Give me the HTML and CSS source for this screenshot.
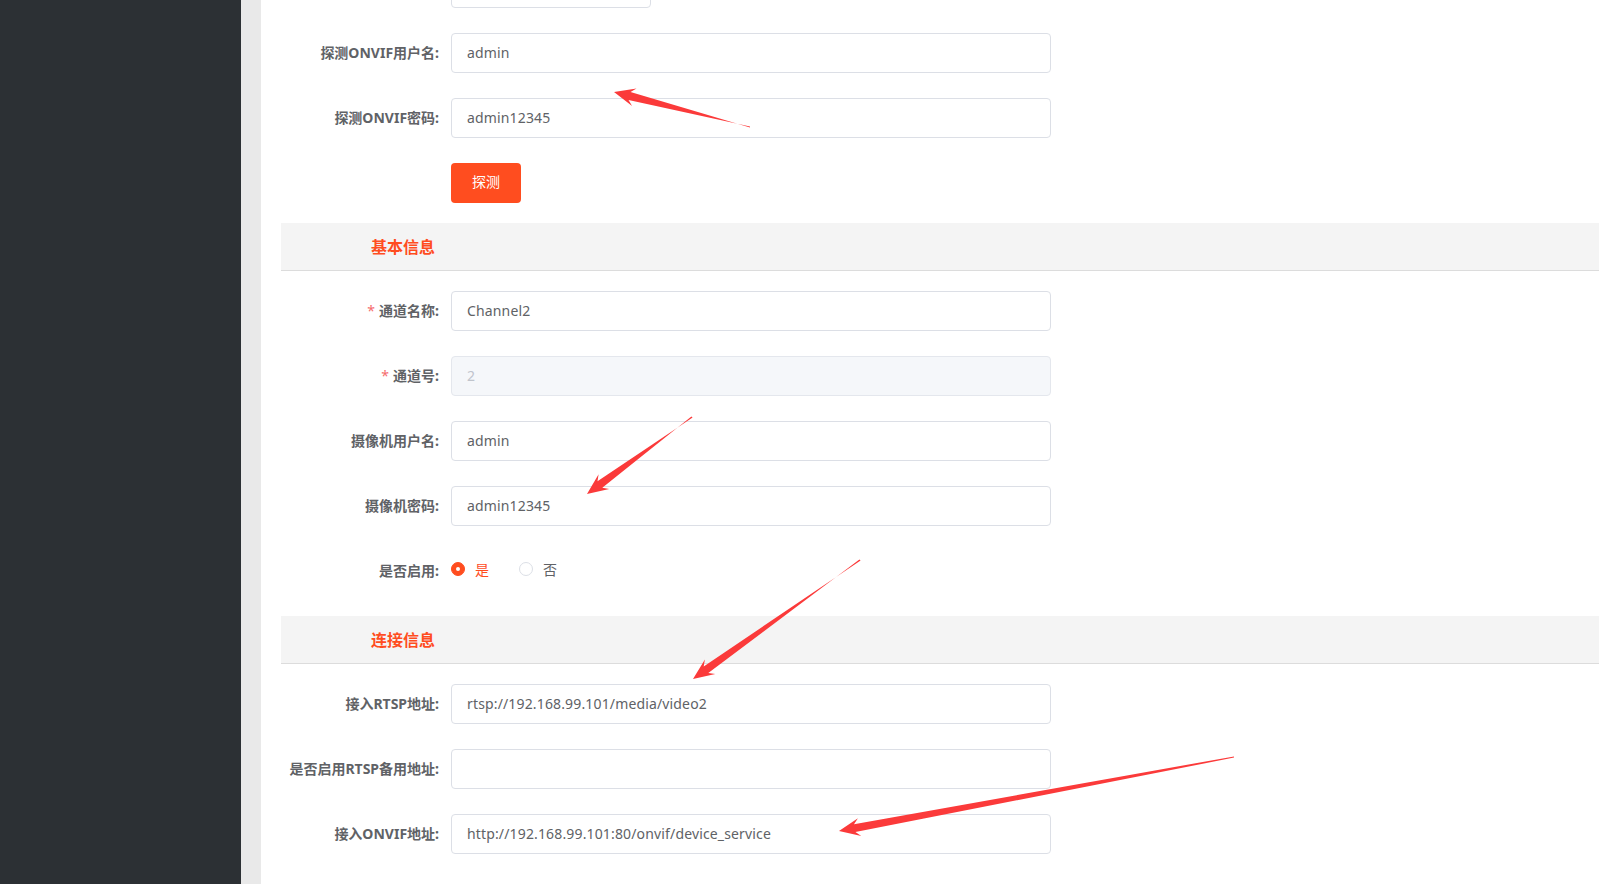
FILE: index.html
```html
<!DOCTYPE html>
<html lang="zh-CN">
<head>
    <meta charset="UTF-8">
    <meta name="viewport" content="width=device-width, initial-scale=1.0">
    <title>通道配置</title>
    <link rel="stylesheet" href="styles.css">
</head>
<body>
    <div class="sidebar"></div>

    <div class="main">
        <div class="panel">
            <form class="channel-form">
                <div class="form-item">
                    <label class="form-label"></label>
                    <input class="form-input short" type="text" value="">
                </div>

                <div class="form-item">
                    <label class="form-label">探测ONVIF用户名:</label>
                    <input class="form-input" type="text" value="admin">
                </div>

                <div class="form-item">
                    <label class="form-label">探测ONVIF密码:</label>
                    <input class="form-input" type="text" value="admin12345">
                </div>

                <div class="form-item actions">
                    <label class="form-label"></label>
                    <button type="button" class="btn-primary">探测</button>
                </div>

                <div class="section-bar">
                    <span class="section-title">基本信息</span>
                </div>

                <div class="form-item">
                    <label class="form-label"><span class="required">*</span>通道名称:</label>
                    <input class="form-input" type="text" value="Channel2">
                </div>

                <div class="form-item">
                    <label class="form-label"><span class="required">*</span>通道号:</label>
                    <input class="form-input" type="text" value="2" disabled>
                </div>

                <div class="form-item">
                    <label class="form-label">摄像机用户名:</label>
                    <input class="form-input" type="text" value="admin">
                </div>

                <div class="form-item">
                    <label class="form-label">摄像机密码:</label>
                    <input class="form-input" type="text" value="admin12345">
                </div>

                <div class="form-item">
                    <label class="form-label">是否启用:</label>
                    <div class="radio-group">
                        <span class="radio checked"><span class="radio-dot"></span><span class="radio-text">是</span></span>
                        <span class="radio"><span class="radio-dot"></span><span class="radio-text">否</span></span>
                    </div>
                </div>

                <div class="section-bar">
                    <span class="section-title">连接信息</span>
                </div>

                <div class="form-item">
                    <label class="form-label">接入RTSP地址:</label>
                    <input class="form-input" type="text" value="rtsp://192.168.99.101/media/video2">
                </div>

                <div class="form-item">
                    <label class="form-label">是否启用RTSP备用地址:</label>
                    <input class="form-input" type="text" value="">
                </div>

                <div class="form-item">
                    <label class="form-label">接入ONVIF地址:</label>
                    <input class="form-input" type="text" value="http://192.168.99.101:80/onvif/device_service">
                </div>
            </form>
        </div>
    </div>

    <!-- annotation arrows drawn over the screenshot -->
    <svg class="annotations" width="1599" height="884" viewBox="0 0 1599 884">
        <polygon points="750,127.6 630.5,92.1 636.5,88.5 614,92 632.1,105.9 628.5,99.9 750,126.4" />
        <polygon points="692.6,417.4 597.5,481.3 598.6,474.3 587,494 609.2,488.9 602.3,487.7 691.4,416.6" />
        <polygon points="860.6,560.4 703.7,666.4 704.9,659.5 693,679 715.3,674.1 708.3,673.0 859.4,559.6" />
        <polygon points="1234,756.4 854.0,824.2 857.9,818.3 839,831 861.3,836.0 855.4,832.0 1234,757.6" />
    </svg>
</body>
</html>
```

FILE: styles.css
```css
body {
    margin: 0;
    padding: 0;
    height: 100vh;
    overflow: hidden;
    display: flex;
    font-family: "Noto Sans", "Noto Sans CJK SC", sans-serif;
    font-size: 14px;
    color: #606266;
    background-color: #fff;
}

.sidebar {
    width: 241px;
    flex-shrink: 0;
    background-color: #2c3034;
}

.main {
    flex: 1;
    background-color: #e9e9e9;
    padding-left: 20px;
    overflow: hidden;
}

.panel {
    height: 100%;
    background-color: #fff;
    padding-left: 20px;
    overflow: hidden;
}

.channel-form {
    margin-top: -32px;
}

.form-item {
    display: flex;
    align-items: center;
    height: 40px;
    margin-bottom: 25px;
}

.form-item.actions {
    margin-bottom: 20px;
}

.form-label {
    width: 170px;
    flex-shrink: 0;
    box-sizing: border-box;
    padding-right: 12px;
    padding-bottom: 2px;
    text-align: right;
    font-weight: bold;
    font-size: 14px;
    color: #606266;
    white-space: nowrap;
}

.required {
    color: #f56c6c;
    font-weight: normal;
    margin-right: 4px;
}

.form-input {
    width: 600px;
    height: 40px;
    box-sizing: border-box;
    padding: 0 15px 2px;
    border: 1px solid #dcdfe6;
    border-radius: 4px;
    font-family: "Noto Sans", "Noto Sans CJK SC", sans-serif;
    font-size: 14px;
    letter-spacing: 0.15px;
    color: #606266;
    background-color: #fff;
    outline: none;
}

.form-input.short {
    width: 200px;
}

.form-input:disabled {
    background-color: #f5f7fa;
    border-color: #e4e7ed;
    color: #c0c4cc;
}

.btn-primary {
    width: 70px;
    height: 40px;
    padding: 0 0 4px;
    border: none;
    border-radius: 4px;
    background-color: #ff4d1f;
    color: #fff;
    font-family: "Noto Sans CJK SC", sans-serif;
    font-size: 14px;
    cursor: pointer;
}

.section-bar {
    height: 48px;
    box-sizing: border-box;
    display: flex;
    align-items: center;
    padding-left: 90px;
    padding-bottom: 2px;
    background-color: #f4f4f4;
    border-bottom: 1px solid #dcdcdc;
    margin-bottom: 20px;
}

.section-title {
    font-size: 16px;
    font-weight: bold;
    color: #ff4d1f;
}

.radio-group {
    display: flex;
    align-items: center;
    padding-bottom: 5px;
}

.radio {
    display: flex;
    align-items: center;
    margin-right: 30px;
    color: #606266;
}

.radio-dot {
    width: 14px;
    height: 14px;
    box-sizing: border-box;
    border: 1px solid #dcdfe6;
    border-radius: 50%;
    background-color: #fff;
    position: relative;
}

.radio.checked .radio-dot {
    border-color: #ff4d1f;
    background-color: #ff4d1f;
}

.radio.checked .radio-dot::after {
    content: "";
    position: absolute;
    left: 50%;
    top: 50%;
    width: 4px;
    height: 4px;
    margin: -2px 0 0 -2px;
    border-radius: 50%;
    background-color: #fff;
}

.radio-text {
    padding-left: 10px;
    font-size: 14px;
}

.radio.checked .radio-text {
    color: #ff4d1f;
}

.annotations {
    position: absolute;
    left: 0;
    top: 0;
    pointer-events: none;
}

.annotations polygon {
    fill: #fb3a3a;
}
```
